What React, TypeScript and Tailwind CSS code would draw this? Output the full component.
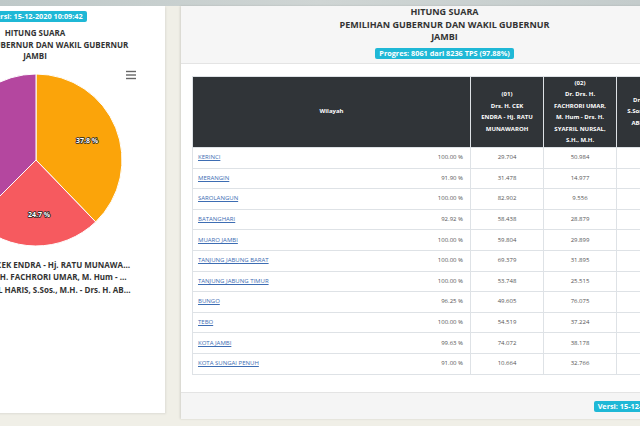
import React from "react";

const rows = [
  ["KERINCI", "100.00 %", "29.704", "50.984"],
  ["MERANGIN", "91.90 %", "31.478", "14.977"],
  ["SAROLANGUN", "100.00 %", "82.902", "9.556"],
  ["BATANGHARI", "92.92 %", "58.438", "28.879"],
  ["MUARO JAMBI", "100.00 %", "59.804", "29.899"],
  ["TANJUNG JABUNG BARAT", "100.00 %", "69.379", "31.895"],
  ["TANJUNG JABUNG TIMUR", "100.00 %", "53.748", "25.515"],
  ["BUNGO", "96.25 %", "49.605", "76.075"],
  ["TEBO", "100.00 %", "54.519", "37.224"],
  ["KOTA JAMBI", "99.63 %", "74.072", "38.178"],
  ["KOTA SUNGAI PENUH", "91.00 %", "10.664", "32.766"],
];

const legenda = [
  { cor: "bg-[#fba40a]", nome: "Drs. H. CEK ENDRA - Hj. RATU MUNAWAROH" },
  { cor: "bg-[#f65a5f]", nome: "Dr. Drs. H. FACHRORI UMAR, M. Hum - Drs. H. SYAFRIL NURSAL, S.H., M.H." },
  { cor: "bg-[#b4479f]", nome: "Dr. H. AL HARIS, S.Sos., M.H. - Drs. H. ABDULLAH SANI, M.Pd.I" },
];

function Badge({ children }: { children: React.ReactNode }) {
  return (
    <span className="block bg-[#1fb8d6] text-white font-bold text-[7.3px] leading-[11px] h-[11px] px-[4px] rounded-[2px] whitespace-nowrap">
      {children}
    </span>
  );
}

function GraficoPizza() {
  // pizza estilo highcharts
  return (
    <div className="relative w-full h-[190px] shrink-0">
      <svg width="256" height="190" className="absolute left-0 top-0">
        <path d="M127,98 L127,12 A86,86 0 0 1 186.7,159.9 Z" fill="#fba40a" stroke="#fff" strokeWidth="1" />
        <path d="M127,98 L186.7,159.9 A86,86 0 0 1 66.2,158.8 Z" fill="#f65a5f" stroke="#fff" strokeWidth="1" />
        <path d="M127,98 L66.2,158.8 A86,86 0 0 1 127,12 Z" fill="#b4479f" stroke="#fff" strokeWidth="1" />
        <g fontFamily="'Open Sans', sans-serif" fontSize="7" fontWeight="bold" textAnchor="middle">
          {[
            [178, 81, "37.8 %"],
            [130, 155, "24.7 %"],
            [76, 79, "37.5 %"],
          ].map(([x, y, t]) => (
            <text key={t as string} x={x} y={y} fill="#fff" stroke="#222" strokeWidth="1.6" paintOrder="stroke" strokeLinejoin="round">
              {t}
            </text>
          ))}
        </g>
        <g stroke="#666" strokeWidth="1.4">
          <line x1="217" y1="9.5" x2="227" y2="9.5" />
          <line x1="217" y1="13" x2="227" y2="13" />
          <line x1="217" y1="16.5" x2="227" y2="16.5" />
        </g>
      </svg>
    </div>
  );
}

export default function App() {
  return (
    <div className="w-[640px] h-[426px] overflow-hidden bg-[#f0efe7] font-['Open_Sans',sans-serif]">
      <div className="h-[6px] bg-gradient-to-r from-[#bfc9c9] via-[#cfd5d4] to-[#c4cccc]" />

      <div className="flex items-start">
        {/* Card do gráfico */}
        <div className="ml-[-91px] w-[256px] h-[407px] shrink-0 bg-white shadow-[1px_1px_2px_rgba(0,0,0,0.08)] flex flex-col items-center pt-[5px]">
          <Badge>Versi: 15-12-2020 10:09:42</Badge>
          <div className="mt-[5px] mr-[4px] text-center font-bold text-[8px] leading-[11.5px] text-[#333] whitespace-nowrap">
            <div>HITUNG SUARA</div>
            <div>PEMILIHAN GUBERNUR DAN WAKIL GUBERNUR</div>
            <div>JAMBI</div>
          </div>
          <GraficoPizza />
          <div className="self-start ml-[47px] mt-[7px] flex flex-col">
            {legenda.map((l) => (
              <div key={l.nome} className="flex items-center gap-[5px] h-[12.5px]">
                <span className={`w-[7px] h-[7px] rounded-full shrink-0 ${l.cor}`} />
                <span className="w-[163px] truncate font-bold text-[8px] leading-[12px] text-[#333]">{l.nome}</span>
              </div>
            ))}
          </div>
        </div>

        {/* Card da tabela */}
        <div className="ml-[16px] w-[527px] h-[413px] shrink-0 bg-white shadow-[-1px_0_2px_rgba(0,0,0,0.12)] flex flex-col">
          <div className="h-[58px] shrink-0 bg-[#f6f6f6] border-b border-[#e4e4e4] flex flex-col items-center">
            <div className="text-center font-bold text-[9px] leading-[12.5px] text-[#333] whitespace-nowrap">
              <div>HITUNG SUARA</div>
              <div>PEMILIHAN GUBERNUR DAN WAKIL GUBERNUR</div>
              <div>JAMBI</div>
            </div>
            <div className="mt-[4px] flex">
              <Badge>Progres: 8061 dari 8236 TPS (97.88%)</Badge>
            </div>
          </div>

          <div className="flex-1 px-[11px] pt-[12px]">
            <table className="w-full border-collapse border border-[#dee2e6] table-fixed">
              <colgroup>
                <col className="w-[200px]" />
                <col className="w-[78px]" />
                <col className="w-[73px]" />
                <col className="w-[73px]" />
                <col />
              </colgroup>
              <thead>
                <tr className="bg-[#303438] text-white font-bold text-[6px] leading-[11.5px] h-[71px]">
                  <th colSpan={2} className="border border-[#dee2e6] text-center font-bold">Wilayah</th>
                  <th className="border border-[#dee2e6] text-center font-bold px-[3px]">
                    (01)<br />Drs. H. CEK<br />ENDRA - Hj. RATU<br />MUNAWAROH
                  </th>
                  <th className="border border-[#dee2e6] text-center font-bold px-[3px]">
                    (02)<br />Dr. Drs. H.<br />FACHRORI UMAR,<br />M. Hum - Drs. H.<br />SYAFRIL NURSAL,<br />S.H., M.H.
                  </th>
                  <th className="border border-[#dee2e6] text-center font-bold px-[3px] whitespace-nowrap">
                    (03)<br />Dr. H. AL HARIS,<br />S.Sos., M.H. - Drs. H.<br />ABDULLAH SANI,<br />M.Pd.I
                  </th>
                </tr>
              </thead>
              <tbody className="text-[6px] text-[#555]">
                {rows.map(([wilayah, persen, a, b]) => (
                  <tr key={wilayah} className="h-[20.6px] border-b border-[#dee2e6]">
                    <td className="pl-[5px]">
                      <a href="#" className="text-[#3d6db3] underline">{wilayah}</a>
                    </td>
                    <td className="text-right pr-[7px]">{persen}</td>
                    <td className="text-center border-l border-[#dee2e6]">{a}</td>
                    <td className="text-center border-l border-[#dee2e6]">{b}</td>
                    <td className="border-l border-[#dee2e6]"></td>
                  </tr>
                ))}
              </tbody>
            </table>
          </div>

          <div className="h-[27px] shrink-0 bg-[#f5f5f5] border-t border-[#e4e4e4] flex items-center justify-end pr-[15px]">
            <Badge>Versi: 15-12-2020 10:09:42</Badge>
          </div>
        </div>
      </div>
    </div>
  );
}
